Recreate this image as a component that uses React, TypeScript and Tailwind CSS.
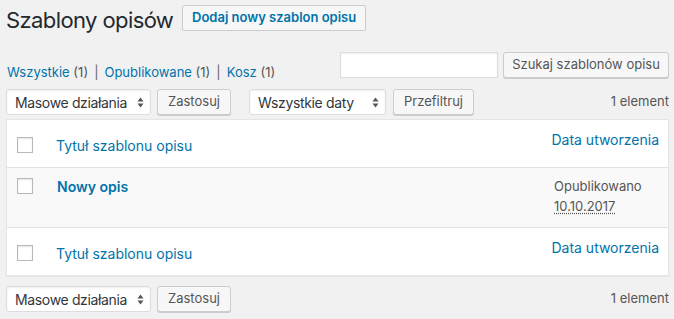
import React from 'react';

// small up/down arrows used by the native-looking selects
const SelectArrows = () => (
  <svg width="7" height="11" viewBox="0 0 7 11" className="shrink-0">
    <path d="M3.5 0.5 L6.5 4.5 L0.5 4.5 Z" fill="#555" />
    <path d="M3.5 10.5 L6.5 6.5 L0.5 6.5 Z" fill="#555" />
  </svg>
);

const FakeSelect = ({ label, width }: { label: string; width: string }) => (
  <div
    className={`${width} h-[26px] flex items-center justify-between pl-[8px] pr-[6px] bg-white border border-[#ddd] rounded-[3px] shadow-[inset_0_1px_2px_rgba(0,0,0,0.07)] text-[14px] tracking-[-0.35px] text-[#32373c]`}
  >
    <span className="whitespace-nowrap">{label}</span>
    <SelectArrows />
  </div>
);

const Button = ({ label, width }: { label: string; width: string }) => (
  <div
    className={`${width} h-[26px] flex items-center justify-center bg-[#f7f7f7] border border-[#ccc] rounded-[3px] shadow-[0_1px_0_#ccc] text-[13px] text-[#555] whitespace-nowrap`}
  >
    {label}
  </div>
);

const Checkbox = () => (
  <div className="w-[16px] h-[16px] bg-white border border-[#b4b9be] shadow-[inset_0_1px_2px_rgba(0,0,0,0.1)]" />
);

// header and footer row share the same look
const HeadRow = ({ border }: { border: 'top' | 'bottom' }) => (
  <div className={`flex h-[48px] ${border === 'bottom' ? 'border-b' : 'border-t'} border-[#e1e1e1]`}>
    <div className="w-[49px] pl-[10px] pt-[17px]">
      <Checkbox />
    </div>
    <div className="flex-1 pt-[15px] text-[14px] text-[#0073aa]">Tytuł szablonu opisu</div>
    <div className="w-[120px] pr-[9px] pt-[9px] text-right text-[14px] text-[#0073aa]">Data utworzenia</div>
  </div>
);

const Tablenav = ({ filters }: { filters: boolean }) => (
  <div className="flex items-center h-[26px]">
    <FakeSelect label="Masowe działania" width="w-[145px]" />
    <div className="ml-[6px]">
      <Button label="Zastosuj" width="w-[74px]" />
    </div>
    {filters && (
      <>
        <div className="ml-[18px]">
          <FakeSelect label="Wszystkie daty" width="w-[137px]" />
        </div>
        <div className="ml-[7px]">
          <Button label="Przefiltruj" width="w-[81px]" />
        </div>
      </>
    )}
    <div className="ml-auto text-[13px] text-[#555]">1 element</div>
  </div>
);

export default function App() {
  return (
    <div className="w-[674px] h-[319px] overflow-hidden bg-[#f1f1f1] pl-[6px] pr-[5px] font-['Inter','Liberation_Sans',sans-serif]">
      <div className="flex items-start h-[40px] pt-[5px]">
        <h1 className="w-[176px] shrink-0 whitespace-nowrap text-[22px] leading-[30px] text-[#23282d] tracking-[-0.6px]">
          Szablony opisów
        </h1>
        <div className="h-[26px] flex items-center px-[9px] bg-[#f7f7f7] border border-[#ccc] rounded-[2px] text-[13px] font-semibold text-[#0073aa] whitespace-nowrap">
          Dodaj nowy szablon opisu
        </div>
      </div>

      <div className="flex items-start mt-[12px] h-[26px]">
        <div className="pt-[11px] pl-[1px] text-[13px] leading-[18px] text-[#555] whitespace-nowrap">
          <span className="text-[#0073aa]">Wszystkie</span> (1)
          <span className="mx-[6px] text-[#666]">|</span>
          <span className="text-[#0073aa]">Opublikowane</span> (1)
          <span className="mx-[6px] text-[#666]">|</span>
          <span className="text-[#0073aa]">Kosz</span> (1)
        </div>
        <div className="ml-auto flex gap-[5px]">
          <div className="w-[158px] h-[26px] bg-white border border-[#ddd] shadow-[inset_0_1px_2px_rgba(0,0,0,0.07)]" />
          <Button label="Szukaj szablonów opisu" width="w-[166px]" />
        </div>
      </div>

      <div className="mt-[11px]">
        <Tablenav filters />
      </div>

      <div className="mt-[4px] bg-white border border-[#e5e5e5] shadow-[0_1px_1px_rgba(0,0,0,0.04)]">
        <HeadRow border="bottom" />
        <div className="flex h-[59px] bg-[#f9f9f9]">
          <div className="w-[49px] pl-[10px] pt-[10px]">
            <Checkbox />
          </div>
          <div className="flex-1 pt-[8px] pl-[1px] text-[14px] font-semibold text-[#0073aa]">Nowy opis</div>
          <div className="w-[120px] pl-[6px] pt-[8px] text-[13px] leading-[20px] text-[#555]">
            <div>Opublikowano</div>
            <div className="w-fit underline decoration-dotted decoration-[#555] underline-offset-2">10.10.2017</div>
          </div>
        </div>
        <HeadRow border="top" />
      </div>

      <div className="mt-[10px]">
        <Tablenav filters={false} />
      </div>
    </div>
  );
}
